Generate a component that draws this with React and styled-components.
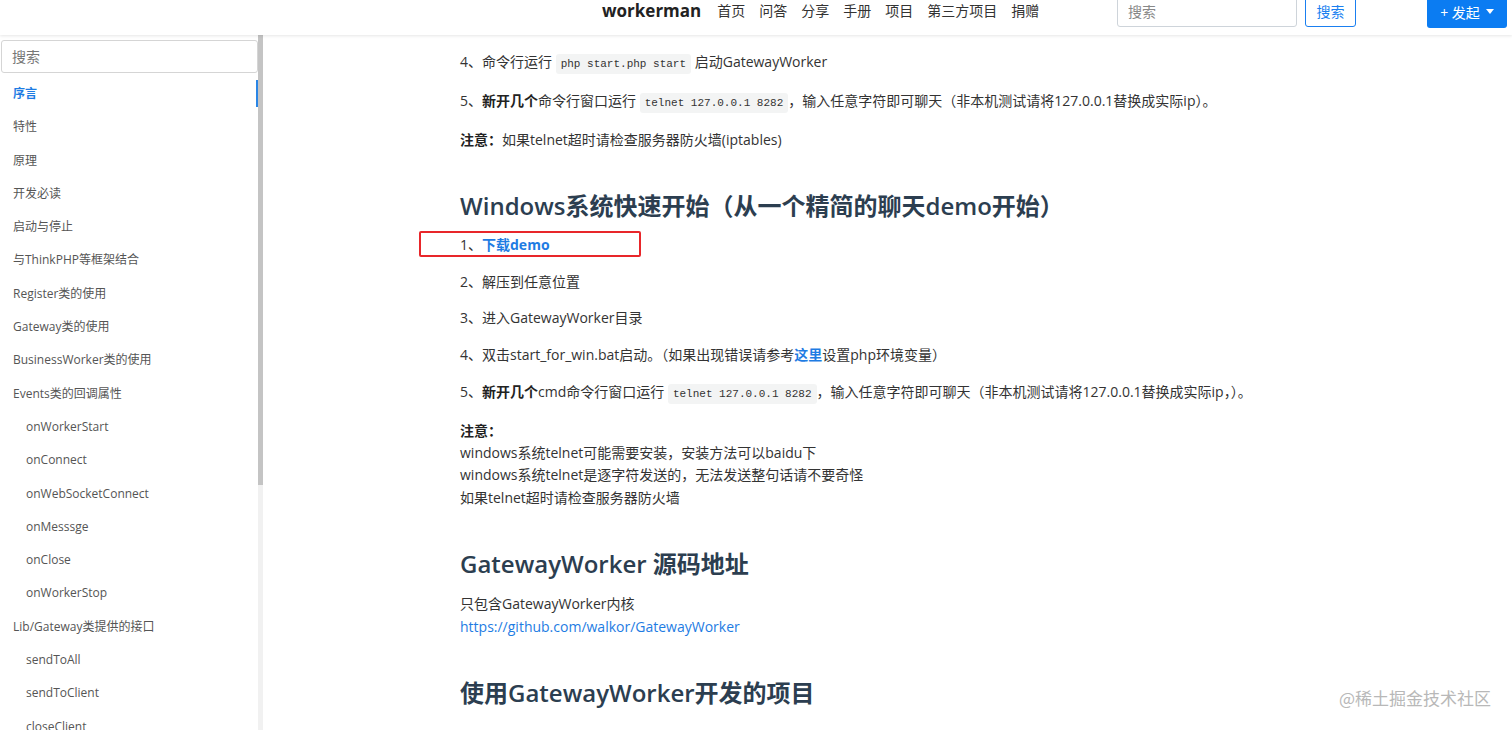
import styled, { createGlobalStyle } from "styled-components";

const GlobalStyle = createGlobalStyle`
  html, body {
    margin: 0;
    padding: 0;
    height: 100%;
    overflow: hidden;
    background: #fff;
    font-family: "Open Sans", "Noto Sans CJK SC", sans-serif;
    color: #333;
  }
  #root {
    height: 100%;
  }
`;

const menu = [
  { label: "序言", active: true },
  { label: "特性" },
  { label: "原理" },
  { label: "开发必读" },
  { label: "启动与停止" },
  { label: "与ThinkPHP等框架结合" },
  { label: "Register类的使用" },
  { label: "Gateway类的使用" },
  { label: "BusinessWorker类的使用" },
  { label: "Events类的回调属性" },
  { label: "onWorkerStart", sub: true },
  { label: "onConnect", sub: true },
  { label: "onWebSocketConnect", sub: true },
  { label: "onMesssge", sub: true },
  { label: "onClose", sub: true },
  { label: "onWorkerStop", sub: true },
  { label: "Lib/Gateway类提供的接口" },
  { label: "sendToAll", sub: true },
  { label: "sendToClient", sub: true },
  { label: "closeClient", sub: true },
];

const navLinks = ["首页", "问答", "分享", "手册", "项目", "第三方项目", "捐赠"];

const App = () => {
  return (
    <>
      <GlobalStyle />
      <Page>
        <Navbar>
          <Brand>workerman</Brand>
          <NavList>
            {navLinks.map((l) => (
              <NavItem key={l}>{l}</NavItem>
            ))}
          </NavList>
          <SearchForm>
            <SearchInput placeholder="搜索" />
            <OutlineButton>搜索</OutlineButton>
          </SearchForm>
          <PrimaryButton>
            + 发起 <Caret />
          </PrimaryButton>
        </Navbar>
        <Body>
          <Sidebar>
            <SideMenu>
              <SideSearch placeholder="搜索" />
              <MenuList>
                {menu.map((m) => (
                  <MenuItem key={m.label} $sub={m.sub} $active={m.active}>
                    {m.label}
                  </MenuItem>
                ))}
              </MenuList>
            </SideMenu>
            <ScrollTrack>
              <ScrollThumb />
            </ScrollTrack>
          </Sidebar>
          <Main>
            <Para>
              4、命令行运行 <Code>php start.php start</Code> 启动GatewayWorker
            </Para>
            <Para>
              5、<b>新开几个</b>命令行窗口运行 <Code>telnet 127.0.0.1 8282</Code>，输入任意字符即可聊天（非本机测试请将127.0.0.1替换成实际ip）。
            </Para>
            <Para>
              <b>注意：</b>如果telnet超时请检查服务器防火墙(iptables)
            </Para>
            <Heading>Windows系统快速开始（从一个精简的聊天demo开始）</Heading>
            <MarkedPara>
              1、<Link>下载demo</Link>
              <RedBox />
            </MarkedPara>
            <Para>2、解压到任意位置</Para>
            <Para>3、进入GatewayWorker目录</Para>
            <Para>
              4、双击start_for_win.bat启动。（如果出现错误请参考<Link>这里</Link>设置php环境变量）
            </Para>
            <Para>
              5、<b>新开几个</b>cmd命令行窗口运行 <Code>telnet 127.0.0.1 8282</Code>，输入任意字符即可聊天（非本机测试请将127.0.0.1替换成实际ip，）。
            </Para>
            <Para>
              <b>注意：</b>
              <br />
              windows系统telnet可能需要安装，安装方法可以baidu下
              <br />
              windows系统telnet是逐字符发送的，无法发送整句话请不要奇怪
              <br />
              如果telnet超时请检查服务器防火墙
            </Para>
            <Heading>GatewayWorker 源码地址</Heading>
            <LinkPara>
              只包含GatewayWorker内核
              <UrlLink>https://github.com/walkor/GatewayWorker</UrlLink>
            </LinkPara>
            <Heading>使用GatewayWorker开发的项目</Heading>
          </Main>
        </Body>
        <Watermark>@稀土掘金技术社区</Watermark>
      </Page>
    </>
  );
};

export default App;

const Page = styled.div`
  position: relative;
  height: 100%;
  display: flex;
  flex-direction: column;
  overflow: hidden;
`;

const Navbar = styled.div`
  flex: 0 0 35px;
  display: flex;
  align-items: flex-end;
  padding: 0 5px 8px 602px;
  box-sizing: border-box;
  background: #fff;
  box-shadow: 0 1px 3px rgba(0, 0, 0, 0.1);
  overflow: hidden;
  position: relative;
  z-index: 2;
`;

const Brand = styled.div`
  font-size: 17px;
  font-weight: 700;
  color: #222;
  line-height: 32px;
`;

const NavList = styled.div`
  display: flex;
  gap: 14px;
  margin-left: 16px;
  line-height: 32px;
`;

const NavItem = styled.span`
  font-size: 14px;
  color: #333;
`;

const SearchForm = styled.div`
  display: flex;
  gap: 8px;
  margin-left: auto;
`;

const SearchInput = styled.input`
  width: 180px;
  height: 32px;
  box-sizing: border-box;
  border: 1px solid #ced4da;
  border-radius: 3px;
  padding: 0 10px;
  font-size: 14px;
  font-family: inherit;
  &::placeholder {
    color: #888;
  }
`;

const OutlineButton = styled.button`
  height: 32px;
  width: 51px;
  border: 1px solid #1a7ff0;
  border-radius: 3px;
  background: #fff;
  color: #1a7ff0;
  font-size: 14px;
  font-family: inherit;
  padding: 0;
`;

const PrimaryButton = styled.button`
  margin-left: 71px;
  height: 33px;
  width: 80px;
  border: none;
  border-radius: 3px;
  background: #0b7cf2;
  color: #fff;
  font-size: 14px;
  font-family: inherit;
  display: flex;
  align-items: center;
  justify-content: center;
  gap: 6px;
  padding: 0;
  margin-bottom: -1px;
`;

const Caret = styled.span`
  width: 0;
  height: 0;
  border-left: 4px solid transparent;
  border-right: 4px solid transparent;
  border-top: 5px solid #fff;
`;

const Body = styled.div`
  flex: 1;
  display: flex;
  min-height: 0;
`;

const Sidebar = styled.div`
  flex: 0 0 266px;
  display: flex;
`;

const SideMenu = styled.div`
  width: 258px;
  display: flex;
  flex-direction: column;
  padding-top: 5px;
  overflow: hidden;
`;

const SideSearch = styled.input`
  flex: 0 0 33px;
  height: 33px;
  box-sizing: border-box;
  margin-left: 1px;
  border: 1px solid #d5d5d5;
  border-radius: 3px;
  padding: 0 10px;
  font-size: 14px;
  font-family: inherit;
  &::placeholder {
    color: #777;
  }
`;

const MenuList = styled.div`
  display: flex;
  flex-direction: column;
  flex-shrink: 0;
  padding-top: 4px;
`;

const MenuItem = styled.div`
  position: relative;
  flex: 0 0 33.3px;
  line-height: 33.3px;
  padding-left: ${(p) => (p.$sub ? "26px" : "13px")};
  font-size: 12px;
  color: ${(p) => (p.$active ? "#1e7ce3" : "#555")};
  font-weight: ${(p) => (p.$active ? 600 : 400)};
  white-space: nowrap;
  &::after {
    content: "";
    display: ${(p) => (p.$active ? "block" : "none")};
    position: absolute;
    right: -1px;
    top: 3px;
    width: 3px;
    height: 27px;
    background: #2a86e6;
  }
`;

const ScrollTrack = styled.div`
  width: 5px;
  background: #f1f1f1;
  display: flex;
  flex-direction: column;
`;

const ScrollThumb = styled.div`
  height: 450px;
  background: #c4c4c4;
`;

const Main = styled.div`
  flex: 1;
  padding: 16px 0 0 194px;
  font-size: 14px;
  color: #333;
`;

const Para = styled.p`
  margin: 0 0 14.5px;
  line-height: 22.3px;
  b {
    font-weight: 700;
    color: #222;
  }
`;

const LinkPara = styled(Para)`
  display: flex;
  flex-direction: column;
  line-height: 23px;
`;

const MarkedPara = styled(Para)`
  position: relative;
`;

const RedBox = styled.span`
  position: absolute;
  left: -41px;
  top: -3px;
  width: 222px;
  height: 26px;
  box-sizing: border-box;
  border: 2px solid #e8262a;
  border-radius: 2px;
`;

const Code = styled.code`
  font-family: "Liberation Mono", monospace;
  font-size: 11px;
  background: #f3f4f4;
  border-radius: 3px;
  padding: 4px 5px;
  color: #333;
`;

const Link = styled.a`
  color: #1e7ce3;
  font-weight: 700;
  text-decoration: none;
`;

const UrlLink = styled.a`
  color: #1e7ce3;
  text-decoration: none;
`;

const Heading = styled.h2`
  margin: 38px 0 11px;
  font-size: 24px;
  line-height: 34px;
  font-weight: 600;
  color: #2c3e50;
`;

const Watermark = styled.div`
  position: absolute;
  right: 21px;
  bottom: 20px;
  font-size: 17px;
  color: #b8b8b8;
  font-family: "Noto Sans CJK SC", sans-serif;
`;
